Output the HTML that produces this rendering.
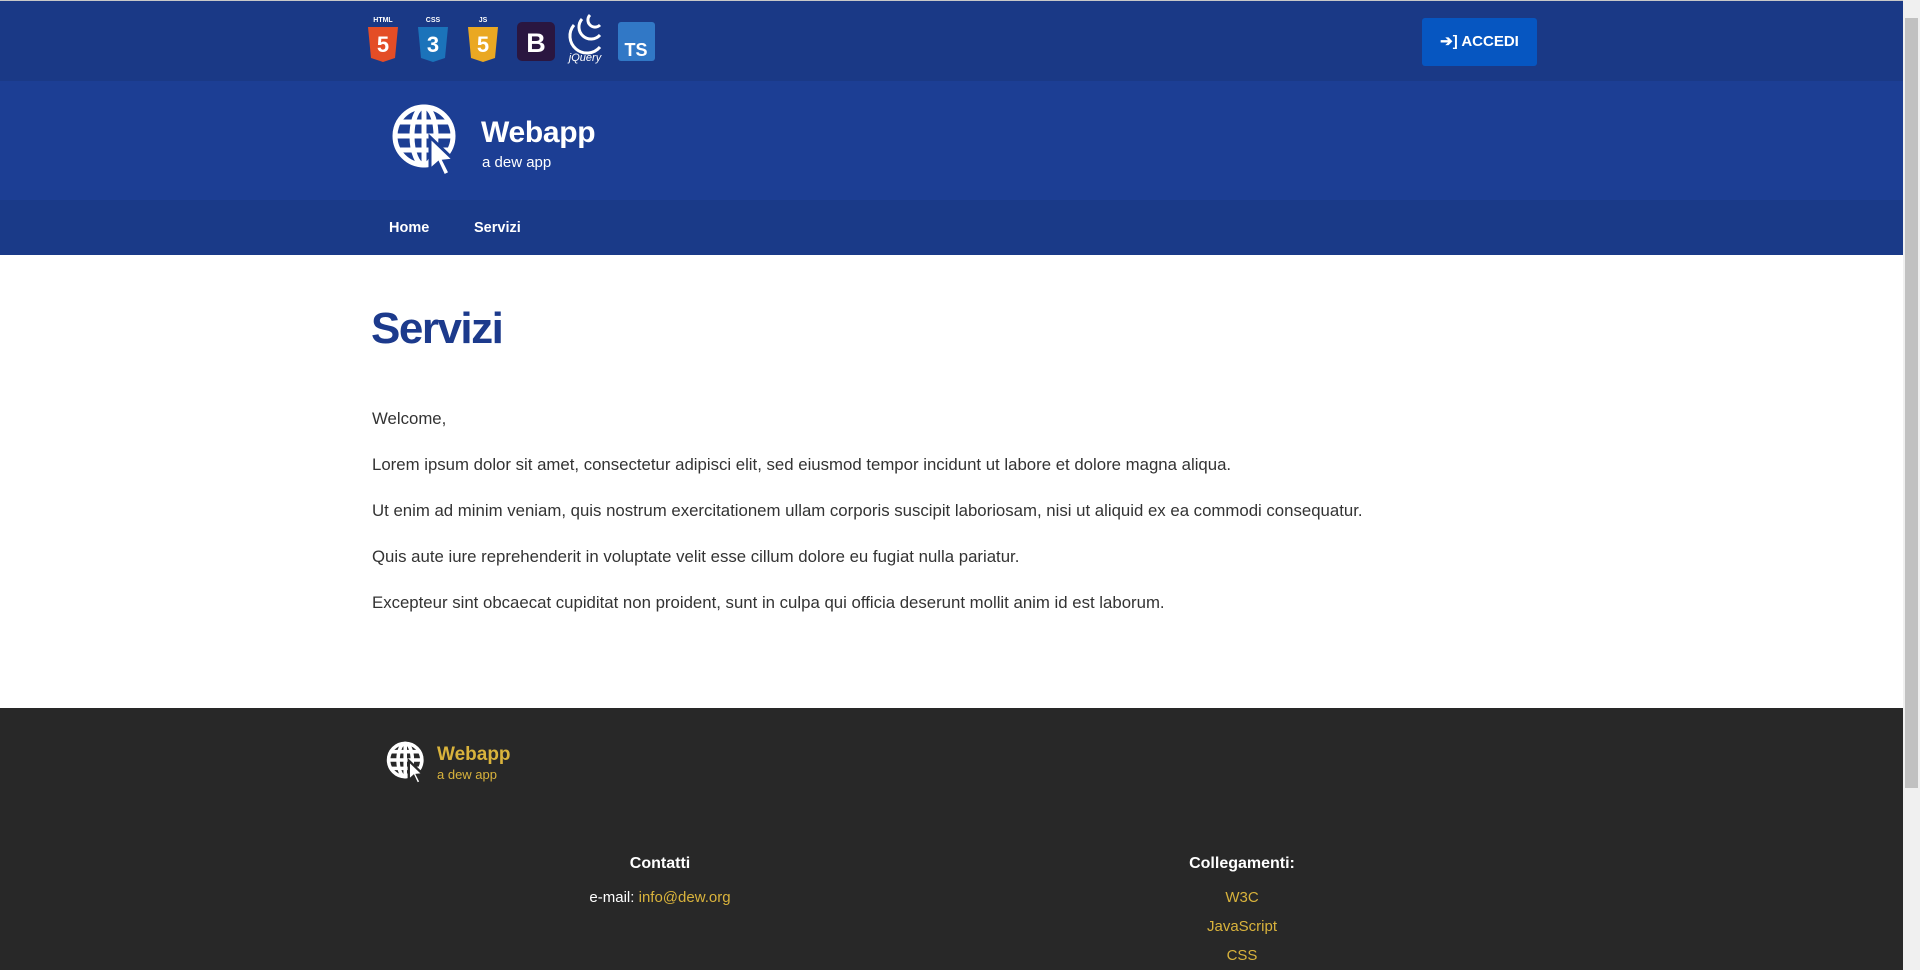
<!DOCTYPE html>
<html><head><meta charset="utf-8"><style>
*{margin:0;padding:0;box-sizing:border-box}
html,body{width:1920px;height:970px;overflow:hidden;background:#fff;font-family:"Liberation Sans",sans-serif}
.top{position:absolute;left:0;top:0;width:1903px;height:81px;background:#1a3986;border-top:1px solid #c8c8c8}
.hdr{position:absolute;left:0;top:81px;width:1903px;height:119px;background:#1c3e94}
.nav{position:absolute;left:0;top:200px;width:1903px;height:55px;background:#1a3a88}
.nav a{position:absolute;top:20px;color:#fff;font-weight:bold;font-size:14.5px;text-decoration:none}
.sb{position:absolute;left:1903px;top:0;width:17px;height:970px;background:#f0f0f0}
.sb div{position:absolute;left:2px;top:18px;width:13px;height:770px;background:#c1c1c1}
.btn{position:absolute;left:1422px;top:17px;width:115px;height:48px;background:#0656c1;border-radius:3px;color:#fff;font-weight:bold;font-size:15px;line-height:48px;text-align:center}
h1{position:absolute;left:371px;top:304px;font-size:44px;color:#1c3a8c;font-weight:bold;letter-spacing:-1.5px}
.p{position:absolute;left:372px;font-size:16.8px;color:#333;}
.ft{position:absolute;left:0;top:708px;width:1903px;height:262px;background:#282828}
.y{color:#d9b33c}
</style></head><body>
<div class="top">
<svg style="position:absolute;left:368px;top:12px" width="290" height="52" viewBox="0 0 290 52">
<text x="15" y="9" fill="#fff" font-size="7" font-weight="bold" text-anchor="middle" font-family="Liberation Sans">HTML</text>
<path d="M0 14h30l-3 31-12 4-12-4z" fill="#e44d26"/><text x="15" y="39" fill="#fff" font-size="22" font-weight="bold" text-anchor="middle" font-family="Liberation Sans">5</text>
<text x="65" y="9" fill="#fff" font-size="7" font-weight="bold" text-anchor="middle" font-family="Liberation Sans">CSS</text>
<path d="M50 14h30l-3 31-12 4-12-4z" fill="#1b73ba"/><text x="65" y="39" fill="#fff" font-size="22" font-weight="bold" text-anchor="middle" font-family="Liberation Sans">3</text>
<text x="115" y="9" fill="#fff" font-size="7" font-weight="bold" text-anchor="middle" font-family="Liberation Sans">JS</text>
<path d="M100 14h30l-3 31-12 4-12-4z" fill="#eaa822"/><text x="115" y="39" fill="#fff" font-size="22" font-weight="bold" text-anchor="middle" font-family="Liberation Sans">5</text>
<rect x="149" y="9" width="38" height="39" rx="5" fill="#2a1640"/><text x="168" y="39" fill="#fff" font-size="27" font-weight="bold" text-anchor="middle" font-family="Liberation Sans">B</text>
<path d="M206 12a14 14 0 0 0 26 22M214 6a11 11 0 0 0 18 16M222 2a7 7 0 0 0 10 10" stroke="#fff" stroke-width="3" fill="none"/>
<text x="217" y="48" fill="#fff" font-size="11" font-style="italic" text-anchor="middle" font-family="Liberation Sans">jQuery</text>
<rect x="250" y="9" width="37" height="39" rx="3" fill="#3178c6"/><text x="268" y="43" fill="#fff" font-size="18" font-weight="bold" text-anchor="middle" font-family="Liberation Sans">TS</text>
</svg>
<div class="btn">➔] ACCEDI</div>
</div>
<div class="hdr">
<svg style="position:absolute;left:392px;top:23px" width="70" height="74" viewBox="0 0 70 74">
<g stroke="#fff" stroke-width="5" fill="none"><circle cx="32" cy="32" r="29"/><ellipse cx="32" cy="32" rx="12" ry="29"/><line x1="3" y1="32" x2="61" y2="32"/><line x1="32" y1="3" x2="32" y2="61"/><line x1="8" y1="18" x2="56" y2="18"/><line x1="8" y1="46" x2="56" y2="46"/></g>
<path d="M38 33l0 33 8-7 6 13 6-3-6-12 10-1z" fill="#fff" stroke="#1c3e94" stroke-width="3"/>
</svg>
<div style="position:absolute;left:481px;top:35px;color:#fff;font-size:30px;font-weight:bold;letter-spacing:-0.3px">Webapp</div>
<div style="position:absolute;left:482px;top:73px;color:#fff;font-size:15px">a dew app</div>
</div>
<div class="nav"><a style="left:389px">Home</a><a style="left:474px">Servizi</a></div>
<h1>Servizi</h1>
<div class="p" style="top:409px">Welcome,</div>
<div class="p" style="top:455px">Lorem ipsum dolor sit amet, consectetur adipisci elit, sed eiusmod tempor incidunt ut labore et dolore magna aliqua.</div>
<div class="p" style="top:501px">Ut enim ad minim veniam, quis nostrum exercitationem ullam corporis suscipit laboriosam, nisi ut aliquid ex ea commodi consequatur.</div>
<div class="p" style="top:547px">Quis aute iure reprehenderit in voluptate velit esse cillum dolore eu fugiat nulla pariatur.</div>
<div class="p" style="top:593px">Excepteur sint obcaecat cupiditat non proident, sunt in culpa qui officia deserunt mollit anim id est laborum.</div>
<div class="ft">
<svg style="position:absolute;left:386px;top:33px" width="42" height="44" viewBox="0 0 70 74">
<g stroke="#fff" stroke-width="6" fill="none"><circle cx="32" cy="32" r="28"/><ellipse cx="32" cy="32" rx="12" ry="28"/><line x1="3" y1="32" x2="61" y2="32"/><line x1="32" y1="3" x2="32" y2="61"/><line x1="8" y1="18" x2="56" y2="18"/><line x1="8" y1="46" x2="56" y2="46"/></g>
<path d="M38 33l0 33 8-7 6 13 6-3-6-12 10-1z" fill="#fff" stroke="#282828" stroke-width="4"/>
</svg>
<div class="y" style="position:absolute;left:437px;top:36px;font-size:19px;font-weight:bold">Webapp</div>
<div class="y" style="position:absolute;left:437px;top:59px;font-size:13px">a dew app</div>
<div style="position:absolute;left:460px;width:400px;top:147px;text-align:center;color:#fff;font-weight:bold;font-size:16px">Contatti</div>
<div style="position:absolute;left:460px;width:400px;top:181px;text-align:center;color:#fff;font-size:15px">e-mail: <span class="y">info@dew.org</span></div>
<div style="position:absolute;left:1042px;width:400px;top:147px;text-align:center;color:#fff;font-weight:bold;font-size:16px">Collegamenti:</div>
<div class="y" style="position:absolute;left:1042px;width:400px;top:175px;text-align:center;font-size:15px;line-height:29px">W3C<br>JavaScript<br>CSS</div>
</div>
<div class="sb"><div></div></div>
</body></html>
